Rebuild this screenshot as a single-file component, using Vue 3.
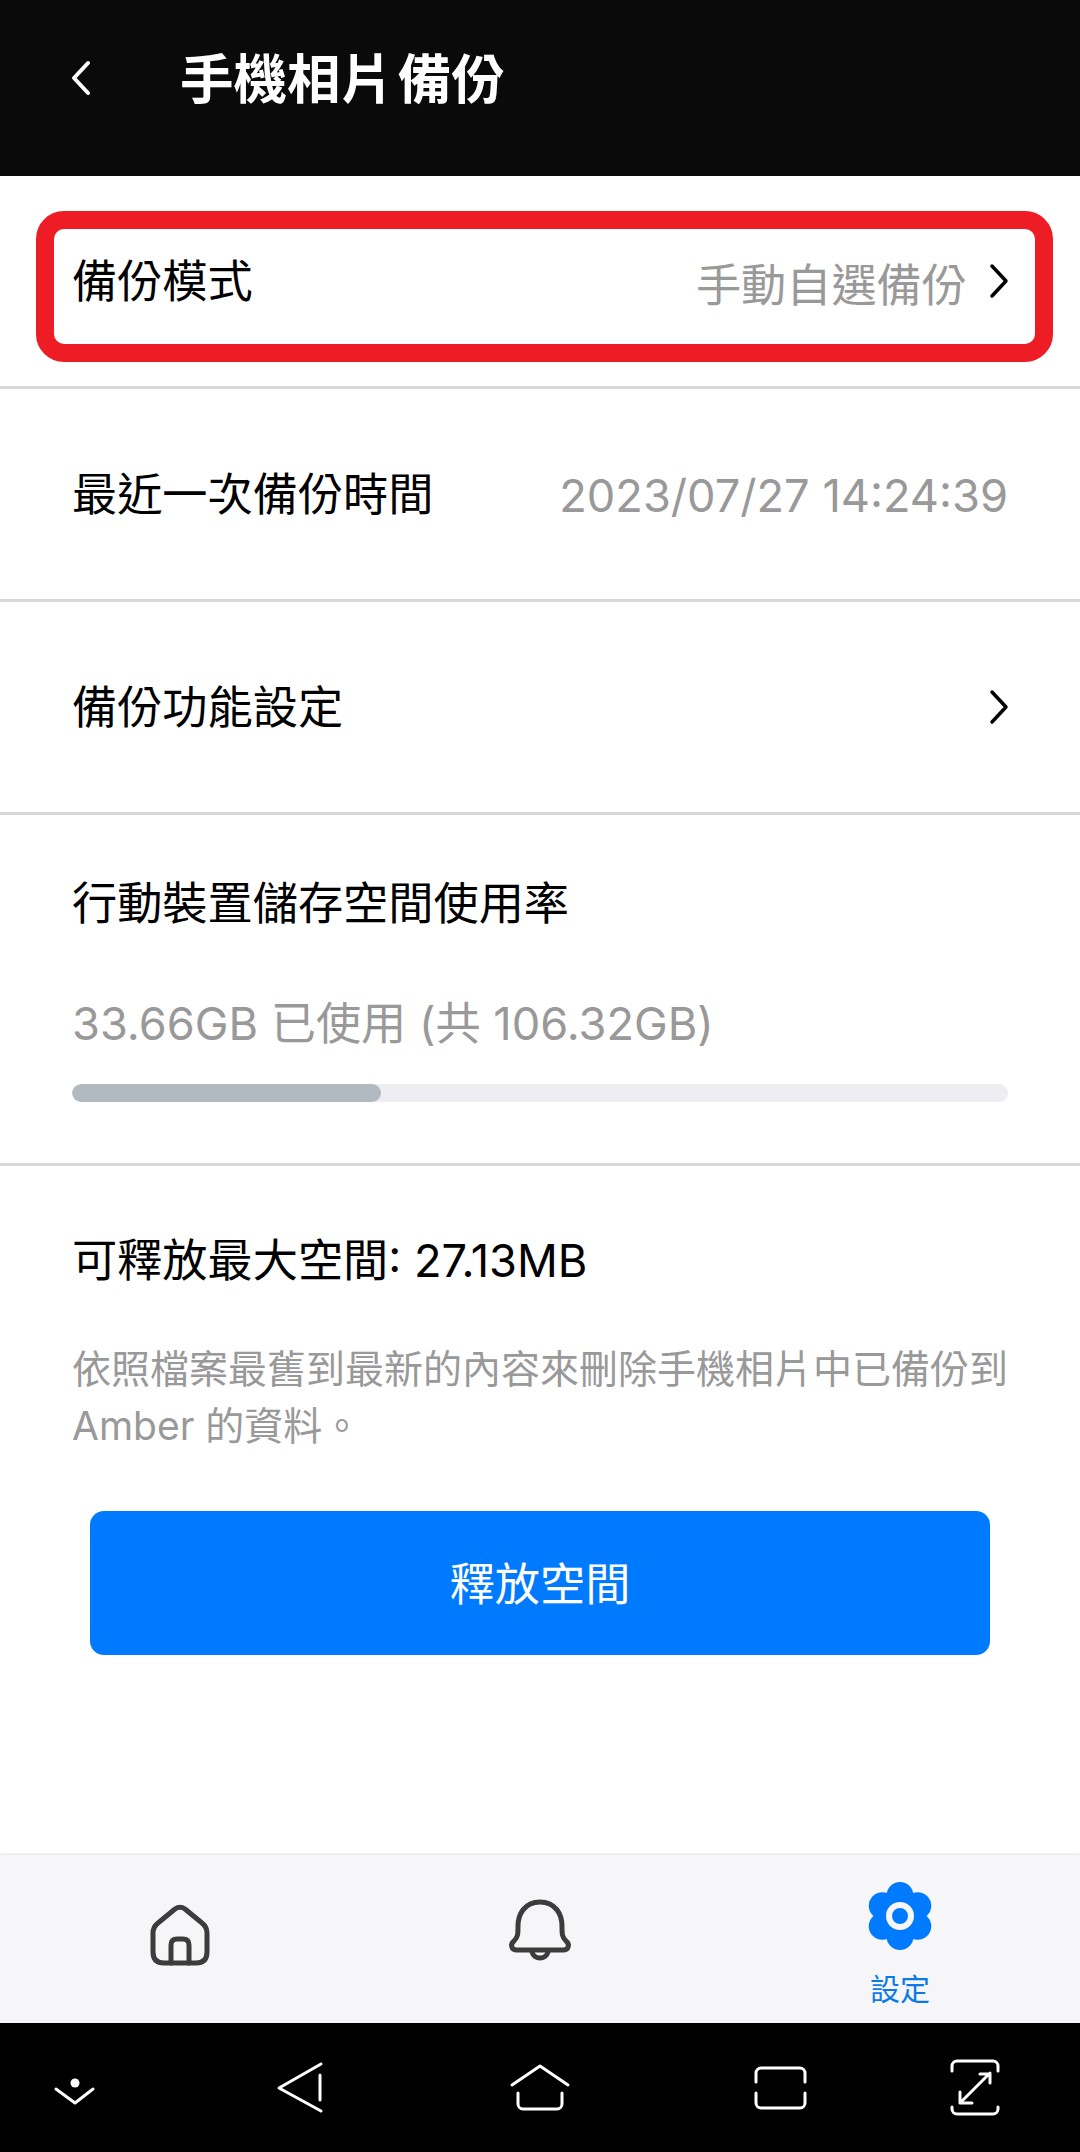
<template>
  <div class="page">
    <header class="header">
      <svg class="back" viewBox="0 0 24 40" width="24" height="40">
        <path d="M19 5 L5 20 L19 35" />
      </svg>
      <h1 class="title">手機相片 備份</h1>
    </header>

    <main class="content">
      <section class="row">
        <span class="label">備份模式</span>
        <span class="value">手動自選備份</span>
        <svg class="chevron" viewBox="0 0 24 40" width="24" height="40">
          <path d="M5 5 L19 20 L5 35" />
        </svg>
        <div class="highlight" />
      </section>

      <section class="row">
        <span class="label">最近一次備份時間</span>
        <span class="value date">2023/07/27 14:24:39</span>
      </section>

      <section class="row">
        <span class="label">備份功能設定</span>
        <svg class="chevron" viewBox="0 0 24 40" width="24" height="40">
          <path d="M5 5 L19 20 L5 35" />
        </svg>
      </section>

      <section class="usage">
        <p class="label">行動裝置儲存空間使用率</p>
        <p class="usage-text">33.66GB 已使用 (共 106.32GB)</p>
        <div class="bar">
          <div class="bar-fill" :style="{ width: usedPercent + '%' }" />
        </div>
      </section>

      <section class="free">
        <p class="label">可釋放最大空間: 27.13MB</p>
        <p class="desc">依照檔案最舊到最新的內容來刪除手機相片中已備份到 Amber 的資料。</p>
        <button class="release">釋放空間</button>
      </section>
    </main>

    <nav class="tabs">
      <div class="tab">
        <svg class="tab-icon" viewBox="0 0 100 100" width="100" height="100">
          <path d="M45 29 Q50 25.5 55 29 L72 43 Q77 47 77 53 V72 Q77 83 66 83 H34 Q23 83 23 72 V53 Q23 47 28 43 Z" />
          <path d="M41 83 V65 Q41 59 47 59 H53 Q59 59 59 65 V83" />
        </svg>
      </div>
      <div class="tab">
        <svg class="tab-icon" viewBox="0 0 100 100" width="100" height="100">
          <path d="M50 22 C34 22 28 35 28 46 C28 54 28 57 24 61 C20 64 21 70 27 70 H73 C79 70 80 64 76 61 C72 57 72 54 72 46 C72 35 66 22 50 22 Z" />
          <path d="M42 72 C44 80 56 80 58 72" />
        </svg>
      </div>
      <div class="tab active">
        <svg class="gear" viewBox="0 0 100 92" width="100" height="92">
          <circle v-for="p in petals" :key="p.x" :cx="p.x" :cy="p.y" r="13.5" fill="#007aff" />
          <circle cx="50" cy="46" r="24" fill="#007aff" />
          <circle cx="50" cy="46" r="11" fill="none" stroke="#f6f6f8" stroke-width="6" />
        </svg>
        <span class="tab-label">設定</span>
      </div>
    </nav>

    <footer class="sysnav">
      <svg viewBox="0 0 80 80" width="80" height="80">
        <circle class="dot" cx="40" cy="35" r="4.5" />
        <path d="M21 41 L40 55 L58 41" />
      </svg>
      <svg viewBox="0 0 80 80" width="80" height="80">
        <path d="M61 16 L19 40 L61 63" />
        <path d="M60 27 V52" />
      </svg>
      <svg viewBox="0 0 80 80" width="80" height="80">
        <path d="M12 37 L40 18 L68 37" />
        <path d="M18 45 V56 a5 5 0 0 0 5 5 H57 a5 5 0 0 0 5 -5 V45" />
      </svg>
      <svg viewBox="0 0 80 80" width="80" height="80">
        <path d="M16 34 V25 a5 5 0 0 1 5 -5 H60 a5 5 0 0 1 5 5 V34" />
        <path d="M16 45 V55 a5 5 0 0 0 5 5 H60 a5 5 0 0 0 5 -5 V45" />
      </svg>
      <svg viewBox="0 0 80 80" width="80" height="80">
        <path d="M17 23 V18 a5 5 0 0 1 5 -5 H58 a5 5 0 0 1 5 5 V23" />
        <path d="M17 59 V61 a5 5 0 0 0 5 5 H58 a5 5 0 0 0 5 -5 V59" />
        <path d="M25 55 L55 25 M45 26 H55 V35 M25 44 V55 H37" />
      </svg>
    </footer>
  </div>
</template>

<script setup>
const usedPercent = 33

// six petals around the middle of the settings gear
const petals = [90, 30, -30, -90, -150, 150].map((deg) => ({
  x: 50 + 20.5 * Math.cos((deg * Math.PI) / 180),
  y: 46 - 20.5 * Math.sin((deg * Math.PI) / 180),
}))
</script>

<style>
html, body { margin: 0; background: #fff; }
</style>

<style scoped>
* { box-sizing: border-box; }
p, h1 { margin: 0; }

.page {
  width: 1080px;
  height: 2152px;
  display: flex;
  flex-direction: column;
  background: #fff;
  color: #000;
  font-family: "Inter", "Noto Sans CJK TC", sans-serif;
}

/* ── header ── */
.header {
  height: 176px;
  flex-shrink: 0;
  background: #0a0a0a;
  display: flex;
  align-items: flex-start;
  padding: 50px 0 0 69px;
}
.back { margin-top: 8px; }
.back path, .chevron path {
  fill: none;
  stroke: #fff;
  stroke-width: 4;
  stroke-linecap: round;
  stroke-linejoin: round;
}
.title {
  margin-left: 87px;
  font-size: 53.5px;
  line-height: 60px;
  font-weight: 700;
  word-spacing: -9px;
  color: #fff;
}

/* ── rows ── */
.content { flex: 1; display: flex; flex-direction: column; }

.row {
  position: relative;
  height: 213px;
  display: flex;
  align-items: center;
  padding: 2px 72px 0;
  border-bottom: 3px solid #d8d8d8;
  flex-shrink: 0;
}
.label { font-size: 45.2px; line-height: 58px; }
.value {
  margin-left: auto;
  font-size: 45.2px;
  color: #999;
}
.chevron { margin: -2px -3px 0 20px; }
.chevron path { stroke: #000; stroke-width: 3.5; }
.row .label + .chevron { margin-left: auto; }

.highlight {
  position: absolute;
  left: 36px;
  top: 35px;
  width: 1017px;
  height: 151px;
  border: 18px solid #ee1c25;
  border-radius: 28px;
}

.usage {
  height: 351px;
  flex-shrink: 0;
  padding: 60px 72px 0;
  border-bottom: 3px solid #d8d8d8;
}
.usage-text {
  margin-top: 62px;
  font-size: 45.2px;
  line-height: 58px;
  color: #999;
}
.bar {
  margin-top: 31px;
  height: 18px;
  border-radius: 9px;
  background: #eeeef2;
  overflow: hidden;
}
.bar-fill {
  height: 100%;
  border-radius: 9px;
  background: #b1b9c1;
}

.free { padding: 66px 72px 0; }
.desc {
  margin-top: 50px;
  font-size: 39px;
  line-height: 57px;
  color: #999;
}
.release {
  display: block;
  width: 900px;
  height: 144px;
  margin: 57px 0 0 18px;
  padding: 0 0 4px;
  border: 0;
  border-radius: 14px;
  background: #007aff;
  color: #fff;
  font-family: inherit;
  font-size: 45.2px;
}

/* ── tabs ── */
.tabs {
  height: 168px;
  flex-shrink: 0;
  display: grid;
  grid-template-columns: repeat(3, 1fr);
  background: #f6f6f8;
  box-shadow: 0 -1px 2px rgba(0, 0, 0, 0.12);
}
.tab {
  display: flex;
  flex-direction: column;
  align-items: center;
  padding-top: 25px;
}
.tab-icon path {
  fill: none;
  stroke: #3c3c3c;
  stroke-width: 5;
  stroke-linejoin: round;
  stroke-linecap: round;
}
.tab.active { padding-top: 15px; }
.tab-label {
  margin-top: 7px;
  font-size: 30px;
  line-height: 40px;
  color: #0a7ae6;
}

/* ── system nav ── */
.sysnav {
  height: 129px;
  flex-shrink: 0;
  background: #000;
  display: grid;
  grid-template-columns: 150px 300px 180px 300px 90px;
  justify-items: center;
  padding-top: 25px;
}
.sysnav path {
  fill: none;
  stroke: #fff;
  stroke-width: 3;
  stroke-linecap: round;
  stroke-linejoin: round;
}
.sysnav .dot { fill: #fff; }
</style>
